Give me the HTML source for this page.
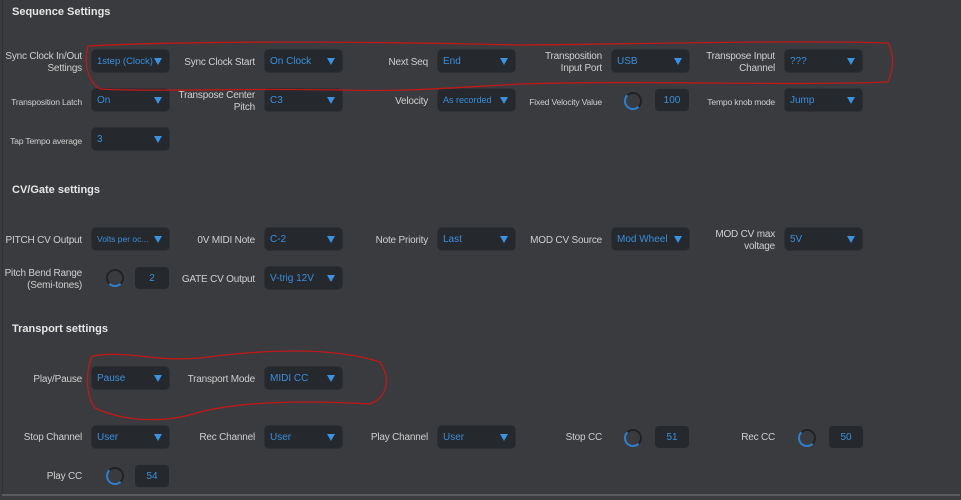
<!DOCTYPE html><html><head><style>
body{margin:0;width:961px;height:500px;background:#3a3b3e;font-family:"Liberation Sans",sans-serif;position:relative;overflow:hidden}
.h{position:absolute;left:12px;color:#e6e6e6;font-weight:bold;font-size:11px}
.l{position:absolute;color:#cfcfcf;font-size:10px;letter-spacing:-0.2px;text-align:right;line-height:12px;white-space:nowrap;margin-top:1px}
.s{font-size:8.6px;letter-spacing:-0.2px}
.d{position:absolute;width:77px;height:22px;background:#25282c;border-radius:4px;box-shadow:0 0 0 1px #2e3034;color:#3b8fdc;font-size:10px;line-height:23px;box-sizing:border-box;padding-left:5px}
.d:after{content:"";position:absolute;right:7px;top:8px;border-left:4px solid transparent;border-right:4px solid transparent;border-top:7px solid #3a92e0}
.n{position:absolute;width:34px;height:22px;background:#25282c;border-radius:4px;color:#3b8fdc;font-size:10px;line-height:23px;text-align:center}
.k{position:absolute;width:14px;height:14px;border-radius:50%;border:2px solid #202225;border-left-color:#2f7ed0;border-bottom-color:#2f7ed0}
</style></head><body>
<div style="position:absolute;left:2px;top:0;width:1px;height:495px;background:#303134"></div>
<div style="position:absolute;left:2px;top:494px;width:958px;height:2px;background:#5a5b5e"></div>
<div class="h" style="top:6px">Sequence Settings</div>
<div class="h" style="top:184px">CV/Gate settings</div>
<div class="h" style="top:323px">Transport settings</div>

<div class="l" style="right:879px;top:50px">Sync Clock In/Out<br>Settings</div>
<div class="d" style="left:92px;top:50px;font-size:9.5px">1step (Clock)</div>
<div class="l" style="right:706px;top:56px">Sync Clock Start</div>
<div class="d" style="left:265px;top:50px">On Clock</div>
<div class="l" style="right:533px;top:56px">Next Seq</div>
<div class="d" style="left:438px;top:50px">End</div>
<div class="l" style="right:359px;top:50px">Transposition<br>Input Port</div>
<div class="d" style="left:612px;top:50px">USB</div>
<div class="l" style="right:186px;top:50px">Transpose Input<br>Channel</div>
<div class="d" style="left:785px;top:50px">???</div>

<div class="l s" style="right:879px;top:95px">Transposition Latch</div>
<div class="d" style="left:92px;top:89px">On</div>
<div class="l" style="right:706px;top:89px">Transpose Center<br>Pitch</div>
<div class="d" style="left:265px;top:89px">C3</div>
<div class="l" style="right:533px;top:95px">Velocity</div>
<div class="d" style="left:438px;top:89px;font-size:9px">As recorded</div>
<div class="l s" style="right:359px;top:95px">Fixed Velocity Value</div>
<div class="k" style="left:624px;top:92px"></div>
<div class="n" style="left:655px;top:89px">100</div>
<div class="l s" style="right:186px;top:95px">Tempo knob mode</div>
<div class="d" style="left:785px;top:89px">Jump</div>

<div class="l s" style="right:879px;top:134px">Tap Tempo average</div>
<div class="d" style="left:92px;top:128px">3</div>

<div class="l" style="right:879px;top:234px">PITCH CV Output</div>
<div class="d" style="left:92px;top:228px;font-size:8.5px">Volts per oc...</div>
<div class="l" style="right:706px;top:234px">0V MIDI Note</div>
<div class="d" style="left:265px;top:228px">C-2</div>
<div class="l" style="right:533px;top:234px">Note Priority</div>
<div class="d" style="left:438px;top:228px">Last</div>
<div class="l" style="right:359px;top:234px">MOD CV Source</div>
<div class="d" style="left:612px;top:228px">Mod Wheel</div>
<div class="l" style="right:186px;top:228px">MOD CV max<br>voltage</div>
<div class="d" style="left:785px;top:228px">5V</div>

<div class="l" style="right:879px;top:267px">Pitch Bend Range<br>(Semi-tones)</div>
<div class="k" style="left:106px;top:269px;border-left-color:#202225;border-bottom-color:#2f7ed0"></div>
<div class="n" style="left:135px;top:267px">2</div>
<div class="l" style="right:706px;top:273px">GATE CV Output</div>
<div class="d" style="left:265px;top:267px">V-trig 12V</div>

<div class="l" style="right:879px;top:373px">Play/Pause</div>
<div class="d" style="left:92px;top:367px">Pause</div>
<div class="l" style="right:706px;top:373px">Transport Mode</div>
<div class="d" style="left:265px;top:367px">MIDI CC</div>

<div class="l" style="right:879px;top:431px">Stop Channel</div>
<div class="d" style="left:92px;top:426px">User</div>
<div class="l" style="right:706px;top:431px">Rec Channel</div>
<div class="d" style="left:265px;top:426px">User</div>
<div class="l" style="right:533px;top:431px">Play Channel</div>
<div class="d" style="left:438px;top:426px">User</div>
<div class="l" style="right:359px;top:431px">Stop CC</div>
<div class="k" style="left:624px;top:429px"></div>
<div class="n" style="left:655px;top:426px">51</div>
<div class="l" style="right:186px;top:431px">Rec CC</div>
<div class="k" style="left:798px;top:429px"></div>
<div class="n" style="left:829px;top:426px">50</div>

<div class="l" style="right:879px;top:470px">Play CC</div>
<div class="k" style="left:106px;top:467px"></div>
<div class="n" style="left:135px;top:465px">54</div>

<svg style="position:absolute;left:0;top:0" width="961" height="500" fill="none" stroke="#c01818" stroke-width="1.3">
<path d="M88 46 C200 40 400 42 520 45 C650 44 780 40 888 43 C895 55 893 70 888 82 C780 86 650 80 520 84 C450 88 400 92 340 90 C250 88 150 92 100 89 C86 80 84 60 88 46 Z"/>
<path d="M92 356 C130 350 150 362 200 358 C260 350 330 346 380 362 C392 380 386 398 370 404 C300 400 240 402 200 412 C160 425 120 420 95 408 C85 395 86 370 92 356 Z"/>
</svg>
</body></html>
